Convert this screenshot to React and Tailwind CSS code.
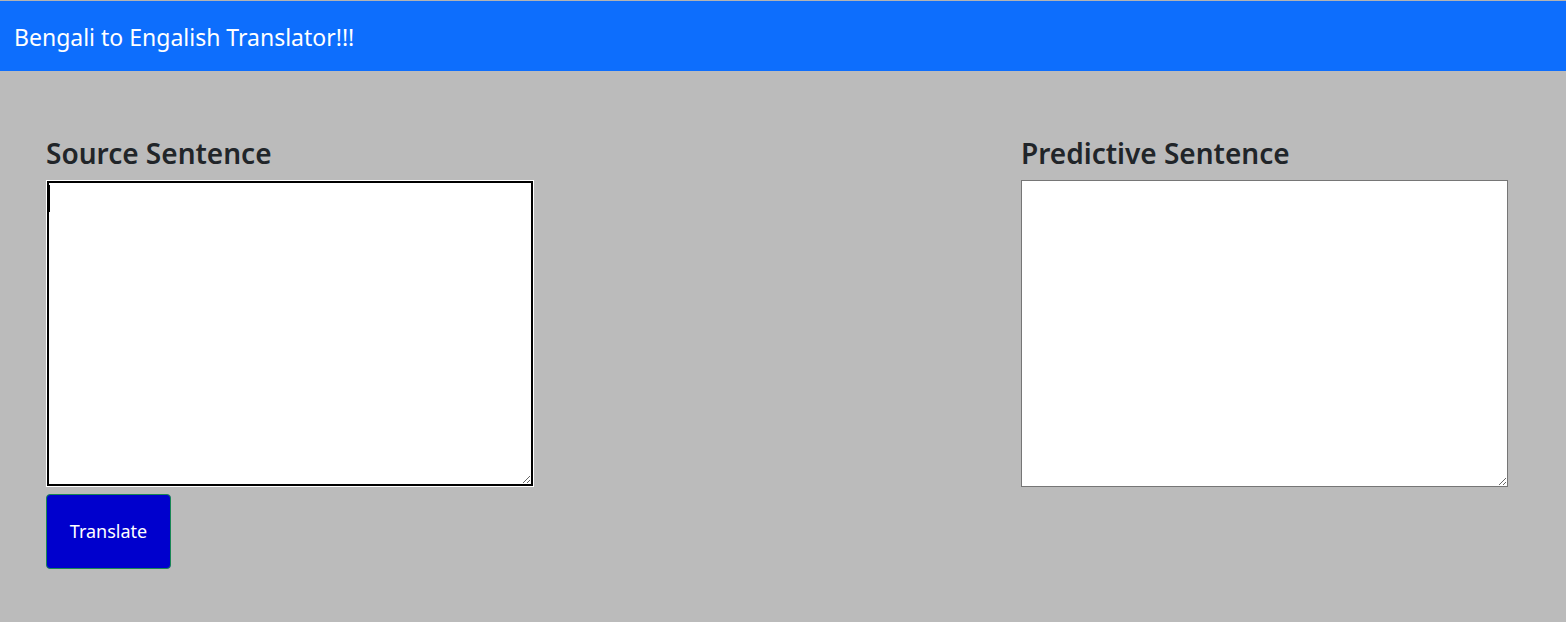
export default function App() {
  const font = { fontFamily: '"Noto Sans", "Open Sans", sans-serif' };
  return (
    <div className="min-h-[622px] w-full bg-[#bbbbbb] font-['Noto_Sans',sans-serif]" style={font}>
      <div className="h-px bg-[#b3b3b3]" />
      <header className="flex h-[70px] items-center bg-[#0d6efd] px-[14px] pt-[3px]">
        <span className="text-[23px] leading-none text-white">Bengali to Engalish Translator!!!</span>
      </header>
      <main className="flex justify-between pl-[46px] pr-[58px] pt-[67px]">
        <div className="flex w-[488px] flex-col">
          <h3 className="mb-[12px] h-[30px] text-[28px] font-semibold leading-[30px] text-[#212529]">Source Sentence</h3>
          <div className="relative">
            <textarea className="ml-px mt-px block h-[305px] w-[486px] border-2 border-black bg-white outline outline-1 outline-white" />
            <span className="absolute left-[3px] top-[5px] h-[27px] w-px bg-black" />
          </div>
          <button className="mt-[8px] h-[75px] w-[125px] rounded-[4px] border border-[#198754] bg-[#0000cd] text-[18px] text-white">Translate</button>
        </div>
        <div className="flex w-[487px] flex-col">
          <h3 className="mb-[12px] h-[30px] text-[28px] font-semibold leading-[30px] text-[#212529]">Predictive Sentence</h3>
          <textarea className="block h-[307px] w-[487px] border border-[#767676] bg-white" />
        </div>
      </main>
    </div>
  );
}
